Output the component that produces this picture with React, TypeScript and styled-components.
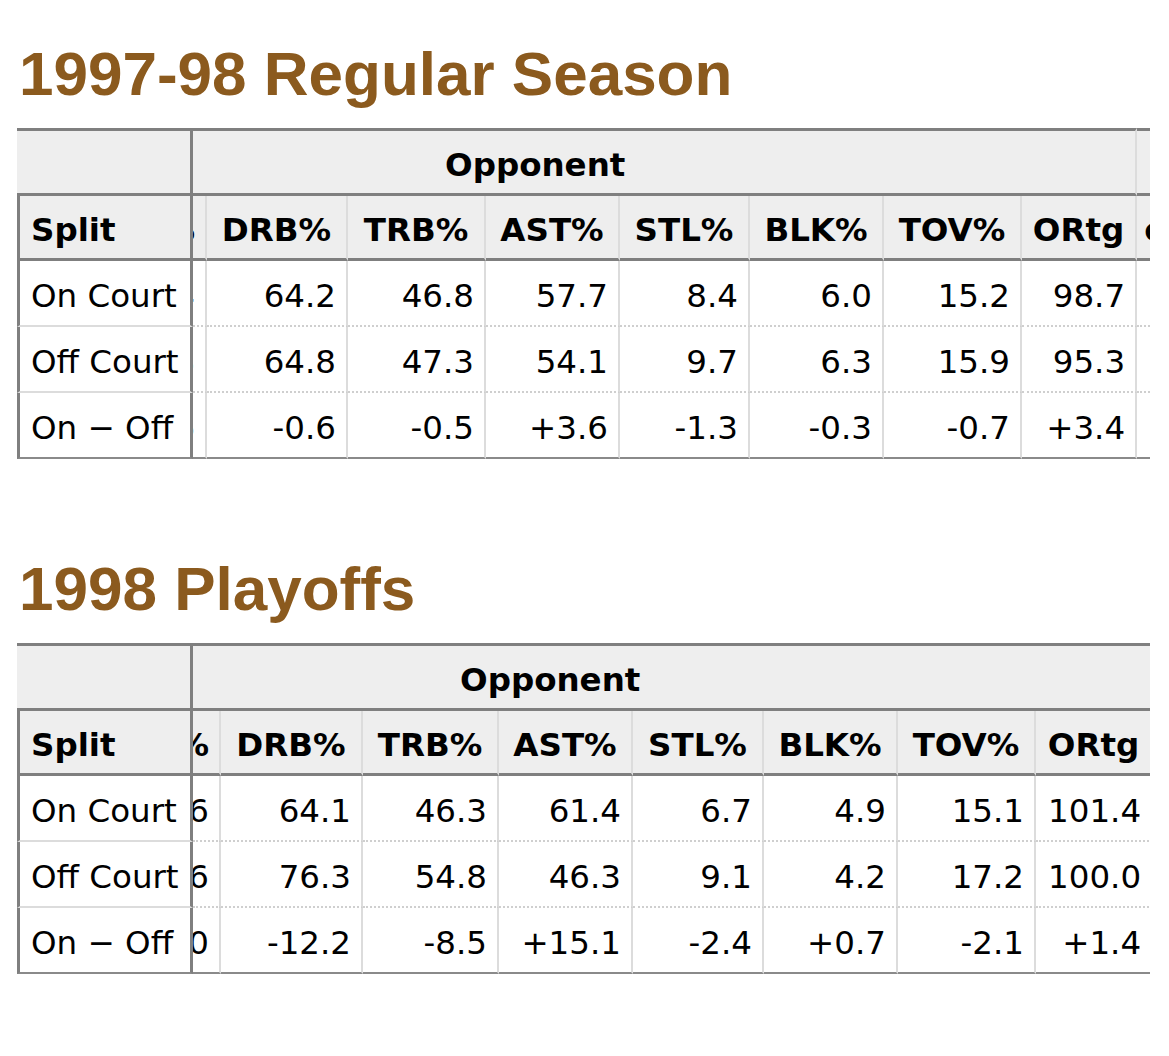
import React from 'react'
import styled, { createGlobalStyle, css } from 'styled-components'

const GlobalStyle = createGlobalStyle`
  body {
    margin: 0;
    background: #fff;
    color: #000;
    font-family: 'DejaVu Sans', Verdana, sans-serif;
  }
`

const DARK = '#7f7f7f'
const LIGHT = '#dcdcdc'

const Page = styled.div`
  padding: 38px 19px 60px 17px;
`

const Section = styled.section`
  & + & {
    margin-top: 94px;
  }
`

const Title = styled.h2`
  margin: 0 0 19px 2px;
  font-family: 'Liberation Sans', Arial, sans-serif;
  font-size: 62px;
  line-height: 71px;
  font-weight: bold;
  color: #8b5a1e;
`

const Scroller = styled.div`
  width: 1133px;
  overflow: hidden;
`

const Table = styled.table<{ $width: number }>`
  table-layout: fixed;
  border-collapse: separate;
  border-spacing: 0;
  width: ${({ $width }) => $width}px;
  font-size: 32.5px;
`

const Row = styled.tr<{ $height: number }>`
  height: ${({ $height }) => $height}px;
`

const GroupHead = styled.th<{ $corner?: boolean; $inset?: number }>`
  padding: 6px 0 0 ${({ $inset }) => $inset ?? 0}px;
  background: #eee;
  border-top: 3px solid ${DARK};
  border-bottom: 3px solid ${DARK};
  border-right: ${({ $corner }) => ($corner ? `3px solid ${DARK}` : `2px solid ${LIGHT}`)};
  font-weight: bold;
  text-align: left;
  white-space: nowrap;
  overflow: hidden;
`

const ColHead = styled.th<{ $split?: boolean; $sliver?: boolean }>`
  padding: 6px 0 0;
  background: #eee;
  border-bottom: 3px solid ${DARK};
  border-right: 2px solid ${LIGHT};
  font-weight: bold;
  text-align: center;
  white-space: nowrap;
  overflow: hidden;

  ${({ $sliver }) =>
    $sliver &&
    css`
      padding-right: 10px;
    `}

  ${({ $split }) =>
    $split &&
    css`
      text-align: left;
      padding-left: 11px;
      border-left: 3px solid ${DARK};
      border-right: 3px solid ${DARK};
    `}
`

const SplitCell = styled.td<{ $last?: boolean }>`
  padding: 6px 0 0 11px;
  border-left: 3px solid ${DARK};
  border-right: 3px solid ${DARK};
  border-bottom: 2px solid ${({ $last }) => ($last ? '#8a8a8a' : LIGHT)};
  white-space: nowrap;
  overflow: hidden;
`

const StatCell = styled.td<{ $last?: boolean }>`
  padding: 6px 10px 0 0;
  border-right: 2px solid ${LIGHT};
  border-bottom: ${({ $last }) => ($last ? '2px solid #8a8a8a' : '2px dotted #cfcfcf')};
  text-align: right;
  white-space: nowrap;
  overflow: hidden;
`

// keeps the end of a value in view when the column is squeezed behind the split column
const Tail = styled.span`
  display: flex;
  justify-content: flex-end;
  overflow: hidden;
  white-space: nowrap;
`

type Stats = { label: string; sliver: string; values: string[]; next?: string }

type Split = {
  title: string
  widths: number[]
  inset: number
  sliverHead: string
  nextHead?: string
  rows: Stats[]
}

const HEADS = ['DRB%', 'TRB%', 'AST%', 'STL%', 'BLK%', 'TOV%', 'ORtg']

const SPLITS: Split[] = [
  {
    title: '1997-98 Regular Season',
    widths: [176, 14, 141, 138, 134, 130, 134, 138, 115, 120],
    inset: 252,
    sliverHead: 'ORB%',
    nextHead: 'eFG%',
    rows: [
      { label: 'On Court', sliver: '30.4', values: ['64.2', '46.8', '57.7', '8.4', '6.0', '15.2', '98.7'], next: '.471' },
      { label: 'Off Court', sliver: '29.8', values: ['64.8', '47.3', '54.1', '9.7', '6.3', '15.9', '95.3'], next: '.468' },
      { label: 'On − Off', sliver: '+0.6', values: ['-0.6', '-0.5', '+3.6', '-1.3', '-0.3', '-0.7', '+3.4'], next: '.003' },
    ],
  },
  {
    title: '1998 Playoffs',
    widths: [176, 28, 142, 136, 134, 131, 134, 138, 117],
    inset: 267,
    sliverHead: 'ORB%',
    rows: [
      { label: 'On Court', sliver: '26.6', values: ['64.1', '46.3', '61.4', '6.7', '4.9', '15.1', '101.4'] },
      { label: 'Off Court', sliver: '29.6', values: ['76.3', '54.8', '46.3', '9.1', '4.2', '17.2', '100.0'] },
      { label: 'On − Off', sliver: '-3.0', values: ['-12.2', '-8.5', '+15.1', '-2.4', '+0.7', '-2.1', '+1.4'] },
    ],
  },
]

const SplitTable = ({ split }: { split: Split }) => {
  const total = split.widths.reduce((a, b) => a + b, 0)
  const groupSpan = 1 + HEADS.length

  return (
    <Section>
      <Title>{split.title}</Title>
      <Scroller>
        <Table $width={total}>
          <colgroup>
            {split.widths.map((w, i) => (
              <col key={i} style={{ width: w }} />
            ))}
          </colgroup>
          <thead>
            <Row $height={68}>
              <GroupHead $corner />
              <GroupHead colSpan={groupSpan} $inset={split.inset}>
                Opponent
              </GroupHead>
              {split.nextHead && <GroupHead />}
            </Row>
            <Row $height={65}>
              <ColHead $split>Split</ColHead>
              <ColHead $sliver>
                <Tail>{split.sliverHead}</Tail>
              </ColHead>
              {HEADS.map((h) => (
                <ColHead key={h}>{h}</ColHead>
              ))}
              {split.nextHead && <ColHead>{split.nextHead}</ColHead>}
            </Row>
          </thead>
          <tbody>
            {split.rows.map((r, i) => {
              const last = i === split.rows.length - 1
              return (
                <Row key={r.label} $height={66}>
                  <SplitCell $last={last}>{r.label}</SplitCell>
                  <StatCell $last={last}>
                    <Tail>{r.sliver}</Tail>
                  </StatCell>
                  {r.values.map((v, j) => (
                    <StatCell key={j} $last={last}>
                      {v}
                    </StatCell>
                  ))}
                  {split.nextHead && <StatCell $last={last}>{r.next}</StatCell>}
                </Row>
              )
            })}
          </tbody>
        </Table>
      </Scroller>
    </Section>
  )
}

const App = () => (
  <>
    <GlobalStyle />
    <Page>
      {SPLITS.map((s) => (
        <SplitTable key={s.title} split={s} />
      ))}
    </Page>
  </>
)

export default App
